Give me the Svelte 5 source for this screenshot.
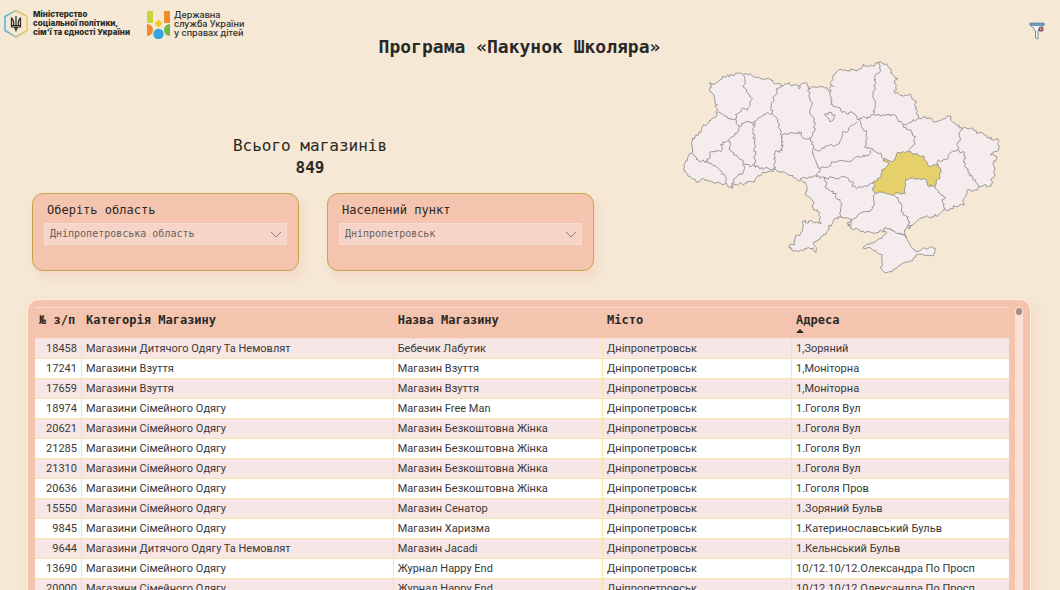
<script>
  const rows = [
    [18458, 'Магазини Дитячого Одягу Та Немовлят', 'Бебечик Лабутик', '1,Зоряний'],
    [17241, 'Магазини Взуття', 'Магазин Взуття', '1,Моніторна'],
    [17659, 'Магазини Взуття', 'Магазин Взуття', '1,Моніторна'],
    [18974, 'Магазини Сімейного Одягу', 'Магазин Free Man', '1.Гоголя Вул'],
    [20621, 'Магазини Сімейного Одягу', 'Магазин Безкоштовна Жінка', '1.Гоголя Вул'],
    [21285, 'Магазини Сімейного Одягу', 'Магазин Безкоштовна Жінка', '1.Гоголя Вул'],
    [21310, 'Магазини Сімейного Одягу', 'Магазин Безкоштовна Жінка', '1.Гоголя Вул'],
    [20636, 'Магазини Сімейного Одягу', 'Магазин Безкоштовна Жінка', '1.Гоголя Пров'],
    [15550, 'Магазини Сімейного Одягу', 'Магазин Сенатор', '1.Зоряний Бульв'],
    [9845, 'Магазини Сімейного Одягу', 'Магазин Харизма', '1.Катеринославський Бульв'],
    [9644, 'Магазини Дитячого Одягу Та Немовлят', 'Магазин Jacadi', '1.Кельнський Бульв'],
    [13690, 'Магазини Сімейного Одягу', 'Журнал Happy End', '10/12.10/12.Олександра По Просп'],
    [20000, 'Магазини Сімейного Одягу', 'Журнал Happy End', '10/12.10/12.Олександра По Просп']
  ];

  const country =
    '103,83 118,86 135,75 143,64 165,62 180,56 205,60 222,58 245,68 270,72 293,76 298,86 318,88 322,95 330,86 345,84 348,93 365,90 372,102 385,85 397,87 400,105 413,95 425,98 445,95 455,98 465,110 468,80 480,58 490,46 510,44 540,46 560,40 565,28 580,35 600,30 612,22 635,26 648,42 655,62 668,70 658,78 662,95 660,115 675,120 695,122 708,120 712,132 720,138 723,165 730,190 752,185 770,192 783,200 805,190 827,183 840,205 852,218 860,225 868,215 880,222 895,225 905,235 920,232 935,243 955,255 967,250 972,275 960,290 947,300 960,303 964,312 955,318 958,335 960,360 950,370 950,392 910,392 900,405 875,408 868,430 868,450 835,452 822,467 808,460 795,475 790,483 780,478 765,490 760,485 735,490 715,508 702,522 708,512 695,518 689,532 693,548 685,540 675,538 655,528 630,518 625,532 615,526 590,533 565,528 540,522 518,512 525,508 518,502 528,495 510,488 480,490 472,505 455,530 435,552 415,568 424,580 422,593 415,578 400,577 385,587 368,590 350,585 344,570 358,570 360,550 378,532 382,500 390,495 400,504 410,497 420,503 440,503 433,495 433,472 415,460 412,435 392,420 397,400 390,382 376,375 360,370 345,362 325,350 302,343 285,348 262,352 240,375 215,385 185,388 172,400 155,386 120,385 95,375 78,373 65,382 60,372 40,365 35,355 24,342 30,325 38,308 50,295 52,258 80,220 115,188 127,180 125,160 122,150 128,150 118,125 107,110 103,83';
  const crimea =
    '693,548 715,582 723,590 735,588 745,578 758,582 770,575 783,580 775,603 750,603 738,598 723,600 712,618 690,622 670,632 652,650 630,653 620,643 615,637 623,630 622,600 605,592 585,578 565,580 575,568 605,558 623,545 635,535 625,522 630,518 655,528 675,538 685,540 693,548';
  const dnipro =
    '625,318 632,312 645,318 650,320 662,305 665,295 685,290 700,288 715,297 748,305 755,320 765,335 790,330 798,345 795,370 783,378 780,392 758,392 755,375 730,370 692,373 690,395 693,417 670,413 655,422 625,412 600,415 593,405 600,378 618,365 620,345 635,335 640,322 625,318';
  const borders = [
    '205,60 210,80 205,92 215,105 230,128 225,150 218,165 200,162 182,178 182,192',
    '127,172 145,180 160,192 182,192 192,215 180,235 160,258 143,260 138,290 103,295 98,322',
    '192,215 200,206 238,200 260,185 275,175 291,175',
    '318,88 300,120 290,150 291,175 308,200 312,220 320,240 322,285 300,292 299,340',
    '238,200 235,230 240,270 238,330 242,338',
    '160,258 170,290 185,300 205,325 240,335 262,342 302,340',
    '205,325 205,350 185,365 170,385 172,400',
    '50,295 65,308 65,315 98,322 125,335 135,345 150,360 155,386',
    '320,240 345,235 380,232 385,250 408,248',
    '400,105 402,120 408,140 408,180 418,195 418,230 408,248 415,280 425,285',
    '450,175 460,178 470,172 480,180 475,188 472,198 465,200 458,188 450,182 450,175',
    '468,93 478,94',
    '465,110 465,135 475,155 495,158 500,172 515,177 530,170 542,180 547,193',
    '613,22 615,50 600,62 600,95 595,120 600,150 595,178 585,188 555,188 547,193',
    '597,178 630,182 655,178 668,192 685,208 712,200 730,190',
    '685,208 700,225 722,245 715,270 700,285',
    '547,193 560,215 575,235 578,250 568,275 585,280 600,288 620,300 632,312',
    '547,200 525,215 520,228 502,235 495,258 480,272 460,272 440,283 425,285',
    '415,280 418,310 435,340 425,365',
    '435,340 460,335 470,320 520,320 545,305 580,302 585,285',
    '376,375 390,368 425,365 450,368 480,370 515,368 530,380 535,395 560,398 580,393 600,378',
    '790,330 788,320 820,310 832,290 848,285 868,295 870,330 885,355 895,375 910,392',
    '858,225 850,260 848,285',
    '450,368 455,400 475,408 485,430 500,445 495,465 497,487',
    '600,415 598,450 585,468 555,475 535,492 528,510',
    '658,422 670,435 680,460 685,480 700,485 702,520',
    '780,392 795,415 812,428 802,440 810,460'
  ];

  // Breaks each straight run into short steps with a repeatable offset, so borders look surveyed.
  function rough(points, amount = 4) {
    const p = points.split(' ').map((s) => s.split(',').map(Number));
    let d = `M${p[0]}`;
    for (let i = 1; i < p.length; i++) {
      const [x0, y0] = p[i - 1];
      const [x1, y1] = p[i];
      const n = Math.max(1, Math.round(Math.hypot(x1 - x0, y1 - y0) / 6));
      for (let k = 1; k < n; k++) {
        const x = x0 + ((x1 - x0) * k) / n;
        const y = y0 + ((y1 - y0) * k) / n;
        const a = Math.sin(x * 12.9 + y * 78.2) * amount;
        const b = Math.cos(x * 39.3 + y * 11.1) * amount;
        d += `L${(x + a).toFixed(1)},${(y + b).toFixed(1)}`;
      }
      d += `L${x1},${y1}`;
    }
    return d;
  }
</script>

<div class="page">
  <header>
    <div class="brands">
      <div class="brand bold">
        <svg width="26" height="30" viewBox="0 0 26 30" aria-hidden="true">
          <defs>
            <linearGradient id="hex" x1="0" x2="1" y1="0" y2="0">
              <stop offset="0" stop-color="#4bb4e4" /><stop offset=".5" stop-color="#b9c58e" /><stop offset="1" stop-color="#f3c64f" />
            </linearGradient>
          </defs>
          <path d="M13 1.500 24 7.500V21.500L13 28 2 21.500V7.500Z" fill="none" stroke="url(#hex)" stroke-width="1.500" stroke-linejoin="round" />
          <path d="M8.500 8.500v9.500h3l1.500 3.500 1.500-3.500h3V8.500M13 7v12M8.500 9c2.500 2 2.500 5 2 8M17.500 9c-2.500 2-2.500 5-2 8M8.500 16.500h9" fill="none" stroke="#26251f" stroke-width="1.200" />
        </svg>
        <p>Міністерство<br />соціальної політики,<br />сім'ї та єдності України</p>
      </div>
      <div class="brand wide">
        <svg width="23" height="30" viewBox="0 0 23 30" aria-hidden="true">
          <path d="M0 2h6v12H0z" fill="#c5d63b" />
          <path d="M17 2h6v12h-6z" fill="#f08a2c" />
          <path d="M11.500 10.500 15.500 14.500l-4 4-4-4z" fill="#f6c629" />
          <path d="M0 15a6 6 0 0 1 0 12z" fill="#f08a2c" />
          <path d="M23 15a6 6 0 0 0 0 12z" fill="#6fb944" />
          <circle cx="11.500" cy="25" r="5.200" fill="#36a5dd" />
        </svg>
        <p>Державна<br />служба України<br />у справах дітей</p>
      </div>
    </div>
    <h1>Програма «Пакунок Школяра»</h1>
    <button class="filter" aria-label="Фільтр">
      <svg width="17" height="18" viewBox="0 0 17 18" aria-hidden="true">
        <path d="M1 2.500 6.500 9v7l2.500 1V9l6-6.500z" fill="#eef3f8" stroke="#7d8b98" />
        <path d="M1 1h14v2.500H1z" fill="#6f9cc8" stroke="#56738f" stroke-width=".6" />
        <circle cx="12" cy="7" r="2" fill="#b88a8a" stroke="#8a4a50" stroke-width="1.200" />
      </svg>
    </button>
  </header>

  <section class="top">
    <div class="controls">
      <div class="kpi">
        <span>Всього магазинів</span>
        <strong>849</strong>
      </div>
      <div class="cards">
        <div class="card">
          <label for="region">Оберіть область</label>
          <div class="pick">
            <select id="region"><option>Дніпропетровська область</option></select>
            <svg width="12" height="7" viewBox="0 0 12 7" aria-hidden="true"><path d="M1 1l5 5 5-5" fill="none" stroke="#8f7f77" /></svg>
          </div>
        </div>
        <div class="card">
          <label for="town">Населений пункт</label>
          <div class="pick">
            <select id="town"><option>Дніпропетровськ</option></select>
            <svg width="12" height="7" viewBox="0 0 12 7" aria-hidden="true"><path d="M1 1l5 5 5-5" fill="none" stroke="#8f7f77" /></svg>
          </div>
        </div>
      </div>
    </div>
    <svg class="map" viewBox="15 15 975 645" role="img" aria-label="Україна">
      <g stroke="#9d9796" stroke-width="3" stroke-linejoin="round">
        <path d={rough(country)} fill="#f5ecee" />
        <path d={rough(crimea, 2)} fill="#f5ecee" />
        {#each borders as b}
          <path d={rough(b)} fill="none" />
        {/each}
        <path d={rough(dnipro, 3)} fill="#e6d069" />
      </g>
    </svg>
  </section>

  <section class="panel">
    <table>
      <colgroup>
        <col class="c-id" /><col class="c-cat" /><col class="c-name" /><col class="c-city" /><col />
      </colgroup>
      <thead>
        <tr>
          <th>№ з/п</th>
          <th>Категорія Магазину</th>
          <th>Назва Магазину</th>
          <th>Місто</th>
          <th aria-sort="ascending">Адреса<i class="sort"></i></th>
        </tr>
      </thead>
      <tbody>
        {#each rows as [id, category, name, address]}
          <tr>
            <td class="num">{id}</td>
            <td>{category}</td>
            <td>{name}</td>
            <td>Дніпропетровськ</td>
            <td>{address}</td>
          </tr>
        {/each}
      </tbody>
    </table>
    <div class="track"><div class="thumb"></div></div>
  </section>
</div>

<style>
  :global(body) {
    margin: 0;
    background: #f5e8d5;
  }
  .page {
    display: flex;
    flex-direction: column;
    height: 100vh;
    overflow: hidden;
    box-sizing: border-box;
    color: #2b2926;
    font-family: 'DejaVu Sans Mono', monospace;
  }
  header {
    display: grid;
    grid-template-columns: 1fr auto 1fr;
    height: 60px;
    padding: 0 24px 0 3px;
    flex: none;
  }
  .brands {
    display: flex;
    gap: 17px;
    padding-top: 9px;
  }
  .brand {
    display: flex;
    align-items: flex-start;
    gap: 4px;
    white-space: nowrap;
    font: 500 8px/9px Inter, sans-serif;
  }
  .brand.bold {
    font-weight: 800;
  }
  .brand.wide {
    font-size: 9px;
  }
  .brand p {
    margin: 1px 0 0;
  }
  h1 {
    margin: 0;
    padding-top: 36px;
    font-size: 18px;
    line-height: 22px;
    font-weight: 700;
    white-space: nowrap;
  }
  .filter {
    justify-self: end;
    align-self: start;
    margin: 22px -10px 0 0;
    padding: 0;
    border: 0;
    background: none;
    line-height: 0;
  }
  .top {
    display: grid;
    grid-template-columns: 562fr 325fr;
    gap: 86px;
    padding: 0 55px 0 32px;
    flex: none;
  }
  .map {
    width: 100%;
  }
  .kpi {
    display: flex;
    flex-direction: column;
    align-items: center;
    padding: 75px 6px 0 0;
    font-size: 16px;
    line-height: 22px;
  }
  .cards {
    display: grid;
    grid-template-columns: 1fr 1fr;
    gap: 28px;
    padding-top: 14px;
  }
  .card {
    box-sizing: border-box;
    height: 78px;
    padding: 7px 11px;
    border: 1px solid #c6a449;
    border-radius: 11px;
    background: #f4c4af;
    box-shadow: 4px 6px 10px #f4c4af66;
  }
  label {
    display: block;
    padding: 0 3px;
    font-size: 12px;
    line-height: 18px;
  }
  .pick {
    position: relative;
    margin-top: 4px;
  }
  .pick svg {
    position: absolute;
    right: 5px;
    top: 8px;
    pointer-events: none;
  }
  select {
    display: block;
    appearance: none;
    width: 100%;
    height: 22px;
    padding: 0 5px;
    border: 1px solid #f5ddd3;
    border-radius: 0;
    background: #f6d5c8;
    color: #68605a;
    font: 10px/20px 'DejaVu Sans Mono', monospace;
  }
  .panel {
    display: flex;
    align-items: flex-start;
    gap: 6px;
    flex: 1;
    min-height: 0;
    margin: 24px 29px 0 27px;
    padding: 7px 7px 0;
    border: 1px solid #fbeee4;
    border-bottom: 0;
    border-radius: 11px 11px 0 0;
    background: #f4c4af;
    box-shadow: 4px 6px 12px #f4c4af66;
  }
  table {
    flex: 1;
    table-layout: fixed;
    border-collapse: separate;
    border-spacing: 0;
    border-top: 1px solid #f8dccf;
  }
  .c-id {
    width: 47px;
  }
  .c-cat {
    width: 32%;
  }
  .c-name {
    width: 21.5%;
  }
  .c-city {
    width: 19.4%;
  }
  th {
    box-sizing: border-box;
    height: 31px;
    padding: 5px 4px 0;
    vertical-align: top;
    text-align: left;
    white-space: nowrap;
    font-size: 12px;
    line-height: 14px;
    border-right: 1px solid #f3cf9f;
    border-bottom: 1px solid #f8dccf;
  }
  .sort {
    display: block;
    width: 0;
    height: 0;
    margin-top: 2px;
    border: 4px solid transparent;
    border-top: 0;
    border-bottom: 4px solid #2b2926;
  }
  td {
    box-sizing: border-box;
    height: 20px;
    padding: 1px 4px 0;
    background: #fff;
    border-right: 1px solid #f7e3a8;
    border-bottom: 1px solid #f7e3a8;
    color: #3a3836;
    font: 11px/18px Roboto, sans-serif;
    white-space: nowrap;
    overflow: hidden;
  }
  tbody tr:nth-child(odd) td {
    background: #f7e6e6;
  }
  th:last-child,
  td:last-child {
    border-right: 0;
  }
  .num {
    text-align: right;
  }
  .track {
    align-self: stretch;
    box-sizing: border-box;
    width: 8px;
    padding: 1px;
    border-radius: 4px 4px 0 0;
    background: #fae0d6;
  }
  .thumb {
    height: 7px;
    border-radius: 3px;
    background: #a98b80;
  }
</style>
